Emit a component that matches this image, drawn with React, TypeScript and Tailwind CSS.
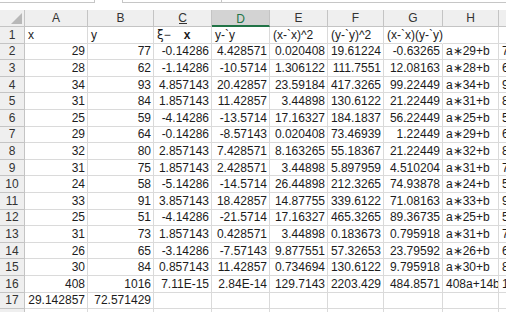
import React from "react";

type Cell = string;

const ROWS: Cell[][] = [
  ["29", "77", "-0.14286", "4.428571", "0.020408", "19.61224", "-0.63265", "a∗29+b", "77"],
  ["28", "62", "-1.14286", "-10.5714", "1.306122", "111.7551", "12.08163", "a∗28+b", "62"],
  ["34", "93", "4.857143", "20.42857", "23.59184", "417.3265", "99.22449", "a∗34+b", "93"],
  ["31", "84", "1.857143", "11.42857", "3.44898", "130.6122", "21.22449", "a∗31+b", "84"],
  ["25", "59", "-4.14286", "-13.5714", "17.16327", "184.1837", "56.22449", "a∗25+b", "59"],
  ["29", "64", "-0.14286", "-8.57143", "0.020408", "73.46939", "1.22449", "a∗29+b", "64"],
  ["32", "80", "2.857143", "7.428571", "8.163265", "55.18367", "21.22449", "a∗32+b", "80"],
  ["31", "75", "1.857143", "2.428571", "3.44898", "5.897959", "4.510204", "a∗31+b", "75"],
  ["24", "58", "-5.14286", "-14.5714", "26.44898", "212.3265", "74.93878", "a∗24+b", "58"],
  ["33", "91", "3.857143", "18.42857", "14.87755", "339.6122", "71.08163", "a∗33+b", "91"],
  ["25", "51", "-4.14286", "-21.5714", "17.16327", "465.3265", "89.36735", "a∗25+b", "51"],
  ["31", "73", "1.857143", "0.428571", "3.44898", "0.183673", "0.795918", "a∗31+b", "73"],
  ["26", "65", "-3.14286", "-7.57143", "9.877551", "57.32653", "23.79592", "a∗26+b", "65"],
  ["30", "84", "0.857143", "11.42857", "0.734694", "130.6122", "9.795918", "a∗30+b", "84"],
  ["408", "1016", "7.11E-15", "2.84E-14", "129.7143", "2203.429", "484.8571", "408a+14b", "1016"],
  ["29.142857", "72.571429", "", "", "", "", "", "", ""],
  ["", "", "", "", "", "", "", "", ""],
];

const LETTERS = ["A", "B", "C", "D", "E", "F", "G", "H", ""];

// columns H and I hold text, the rest numbers
const isText = (col: number) => col >= 7;

function TopStrip() {
  return (
    <div className="flex h-[10px] bg-white">
      <div className="h-[3px] w-[95px] border-b border-r border-[#c6c6c6]" />
      <div className="w-[27px]" />
      <div className="h-[3px] w-[100px] border-b border-l border-r border-[#c6c6c6]" />
      <div className="h-[3px] flex-1 border-b border-[#c6c6c6]" />
    </div>
  );
}

function HeaderRow() {
  return (
    <>
      <div className="relative border-b border-r border-[#c4c4c4] bg-[#efefef]">
        <svg className="absolute bottom-[2px] right-[2px]" width="11" height="11" viewBox="0 0 11 11">
          <polygon points="11,0 11,11 0,11" fill="#b8b8b8" />
        </svg>
      </div>
      {LETTERS.map((l, i) =>
        l === "D" ? (
          <div
            key={i}
            className="flex items-center justify-center border-b-2 border-r border-b-[#217346] border-r-[#c4c4c4] bg-[#d3d3d3] pt-[2px] text-[#217346]"
          >
            {l}
          </div>
        ) : (
          <div
            key={i}
            className="flex items-center justify-center border-b border-r border-[#c4c4c4] bg-[#efefef] text-[#333]"
          >
            {l}
          </div>
        )
      )}
    </>
  );
}

function FirstRow() {
  const cell = "flex items-center overflow-hidden whitespace-nowrap border-b border-r border-[#dadada] pl-[3px]";
  return (
    <>
      <div className="flex items-center justify-center border-b border-r border-[#c4c4c4] bg-[#efefef] text-[#333]">1</div>
      <div className={cell}>x</div>
      <div className={cell}>y</div>
      <div className={cell}>
        <span className="font-['DejaVu_Sans']">ξ</span>
        <span>−</span>
        <span className="ml-[13px] font-bold">x</span>
      </div>
      <div className={cell}>y-`y</div>
      <div className={cell}>(x-`x)^2</div>
      <div className={cell}>(y-`y)^2</div>
      <div className="relative z-10 flex items-center whitespace-nowrap border-b border-r border-b-[#dadada] border-r-transparent pl-[3px]">
        (x-`x)(y-`y)
      </div>
      <div className={cell} />
      <div className={cell} />
    </>
  );
}

export default function App() {
  return (
    <div
      className="relative h-[312px] w-[506px] overflow-hidden bg-white text-[12px] leading-none text-[#1c1c1c]"
      style={{ fontFamily: '"Liberation Sans", "Noto Sans CJK SC", sans-serif' }}
    >
      <TopStrip />
      <div className="grid grid-cols-[25px_63px_66px_58px_58px_58px_56px_59px_56px_60px] grid-rows-[17px_repeat(18,16.6px)]">
        <HeaderRow />
        <FirstRow />
        {ROWS.map((row, r) => (
          <React.Fragment key={r}>
            <div className="flex items-center justify-center border-b border-r border-[#c4c4c4] bg-[#efefef] text-[#333]">
              {r + 2}
            </div>
            {row.map((v, c) => (
              <div
                key={c}
                className={
                  isText(c)
                    ? "flex items-center overflow-hidden whitespace-nowrap border-b border-r border-[#dadada] pl-[3px]"
                    : "flex items-center justify-end overflow-hidden whitespace-nowrap border-b border-r border-[#dadada] pr-[2px]"
                }
              >
                {v}
              </div>
            ))}
          </React.Fragment>
        ))}
      </div>
      {/* bar of the x̄ that spills up into the C header */}
      <div className="absolute left-[179px] top-[23px] h-px w-[8px] bg-[#333]" />
    </div>
  );
}
